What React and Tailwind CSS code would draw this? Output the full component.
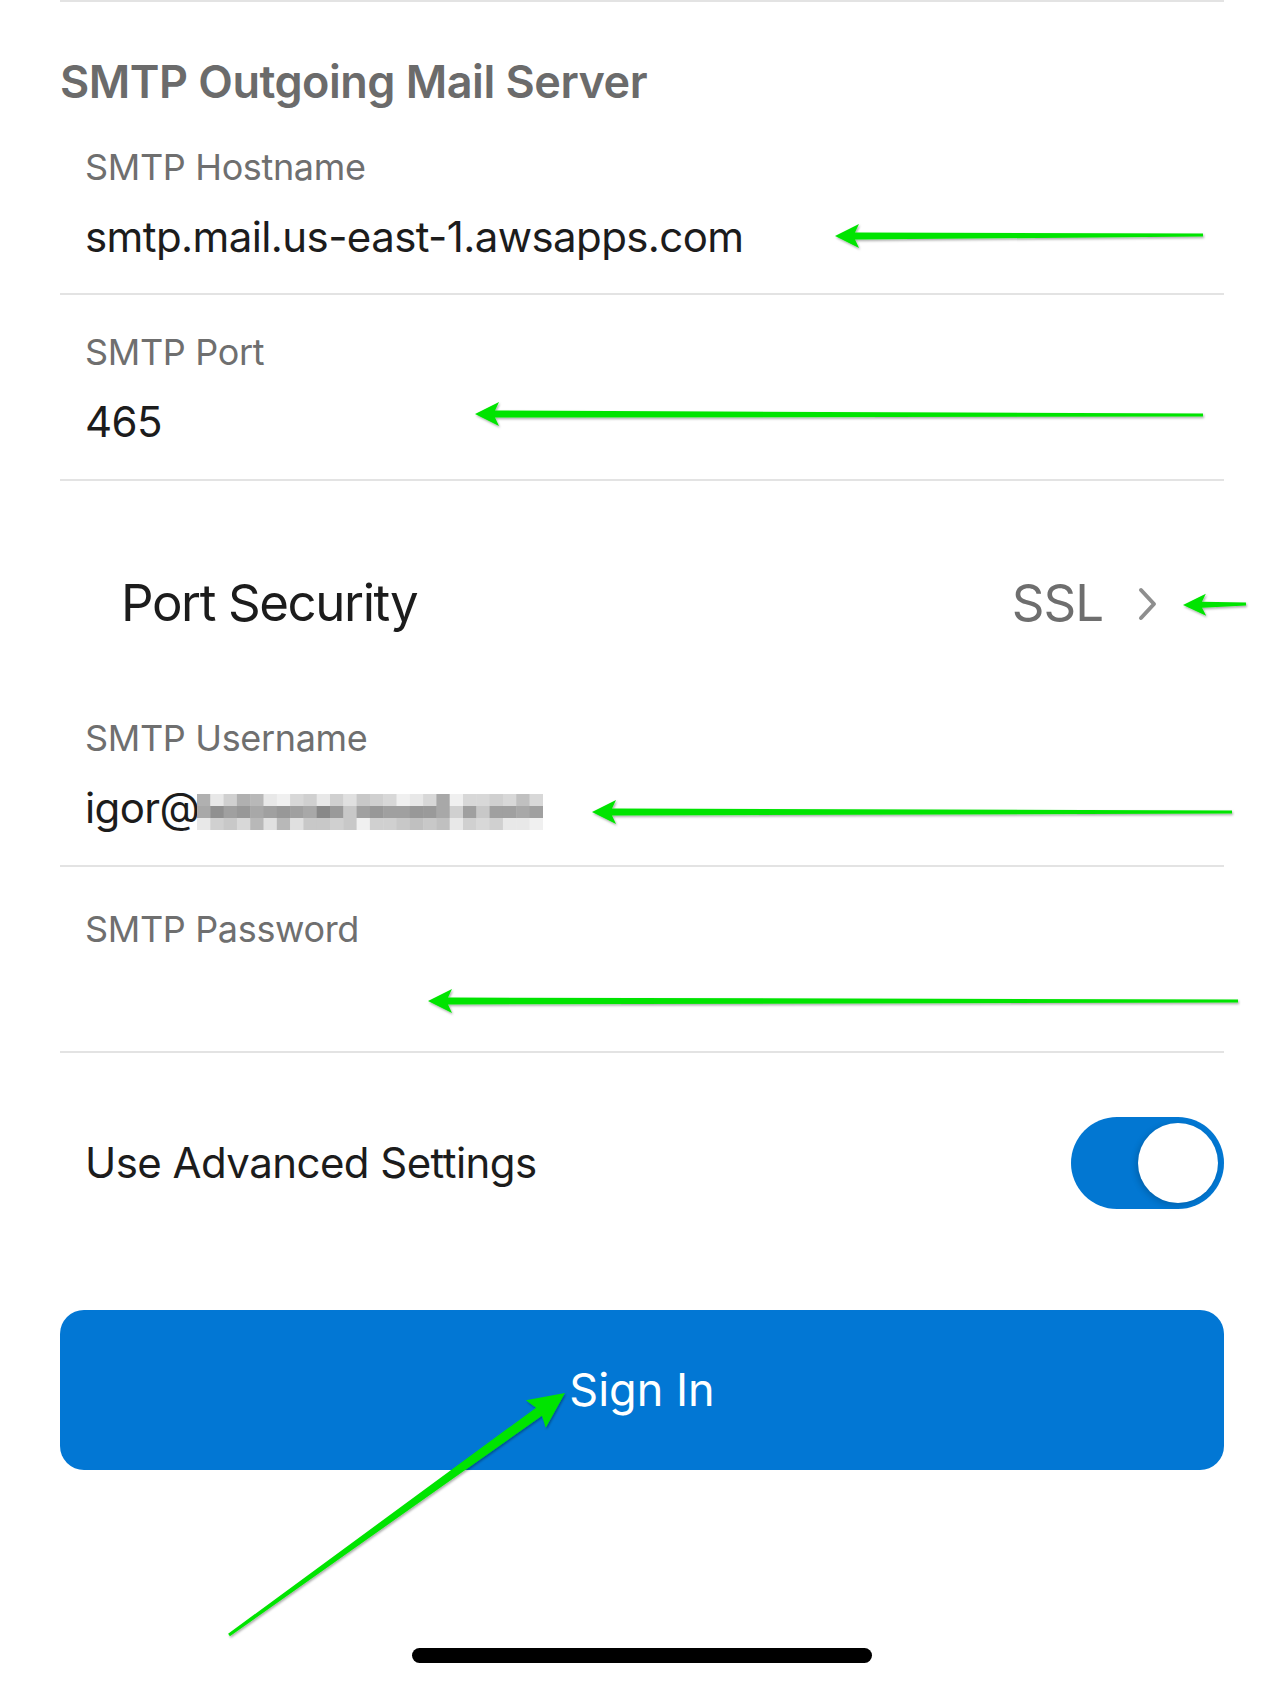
// App.jsx
const FONT = "font-['Inter','Liberation_Sans',sans-serif]";

const ROW1 = ['b0b0b0','e8e8e8','d0d0d0','b0b0b0','b8b8b8','e8e8e8','f0f0f0','d8d8d8','d0d0d0','e8e8e8','d0d0d0','e0e0e0','c8c8c8','d0d0d0','d8d8d8','f0f0f0','e8e8e8','d8d8d8','a8a8a8','f0f0f0','d8d8d8','d8d8d8','d0d0d0','d8d8d8','c0c0c0','d8d8d8'];
const ROW2 = ['a8a8a8','909090','a0a0a0','989898','a8a8a8','a0a0a0','989898','a0a0a0','a8a8a8','888888','9a9a9a','c8c8c8','a0a0a0','989898','a0a0a0','a0a0a0','989898','9a9a9a','a8a8a8','d0d0d0','a0a0a0','c8c8c8','a0a0a0','a0a0a0','a8a8a8','a0a0a0'];
const ROW3 = ['e8e8e8','d0d0d0','c8c8c8','d8d8d8','b8b8b8','e0e0e0','b8b8b8','e0e0e0','c8c8c8','c8c8c8','d0d0d0','c8c8c8','f0f0f0','d0d0d0','d0d0d0','c8c8c8','c0c0c0','c8c8c8','c0c0c0','e8e8e8','d0d0d0','d8d8d8','d0d0d0','e8e8e8','e8e8e8','f0f0f0'];

// pixelated blur over the e-mail domain
const Mosaic = () => {
  const w = 13.3;
  return (
    <svg width="346" height="36" viewBox="0 0 346 36" className="inline-block align-[-7px] -ml-[3px]">
      {[ROW1, ROW2, ROW3].map((row, r) =>
        row.map((c, i) => (
          <rect key={`${r}-${i}`} x={i * w} y={r * 12} width={w + 0.5} height="12.5" fill={`#${c}`} />
        ))
      )}
    </svg>
  );
};

// green annotation arrow, tail -> tip
const arrowPoints = ([tx, ty], [hx, hy], headLen, headHalf, tailW, neckW) => {
  const dx = hx - tx, dy = hy - ty;
  const len = Math.hypot(dx, dy);
  const ux = dx / len, uy = dy / len;
  const px = -uy, py = ux;
  const bx = hx - ux * headLen, by = hy - uy * headLen;
  const nx = hx - ux * (headLen - 4), ny = hy - uy * (headLen - 4);
  const pts = [
    [hx, hy],
    [bx + px * headHalf, by + py * headHalf],
    [nx + px * neckW, ny + py * neckW],
    [tx + px * tailW, ty + py * tailW],
    [tx - px * tailW, ty - py * tailW],
    [nx - px * neckW, ny - py * neckW],
    [bx - px * headHalf, by - py * headHalf],
  ];
  return pts.map((p) => p.join(',')).join(' ');
};

const ARROWS = [
  { tail: [1203, 235], tip: [835, 236], hl: 24, hh: 12, tw: 1.5, nw: 3.5 },
  { tail: [1203, 415], tip: [475, 414], hl: 24, hh: 12, tw: 1.5, nw: 3.5 },
  { tail: [1246, 604], tip: [1183, 605], hl: 23, hh: 11, tw: 1.5, nw: 3 },
  { tail: [1232, 812], tip: [592, 812], hl: 24, hh: 12, tw: 1.5, nw: 3.5 },
  { tail: [1238, 1001], tip: [428, 1001], hl: 24, hh: 12, tw: 1.5, nw: 3.5 },
  { tail: [229, 1635], tip: [565, 1393], hl: 36, hh: 17, tw: 1.5, nw: 5 },
];

const Arrows = () => (
  <svg className="absolute inset-0 pointer-events-none" width="1284" height="1687">
    <defs>
      <filter id="shadow" x="-10%" y="-50%" width="120%" height="200%">
        <feDropShadow dx="1" dy="1.5" stdDeviation="1" floodColor="#000" floodOpacity="0.35" />
      </filter>
    </defs>
    {ARROWS.map((a, i) => (
      <polygon key={i} points={arrowPoints(a.tail, a.tip, a.hl, a.hh, a.tw, a.nw)} fill="#00e400" filter="url(#shadow)" strokeLinejoin="round" />
    ))}
  </svg>
);

const Divider = () => <div className="h-[2px] bg-[#e3e3e3]" />;

const Field = ({ label, children, pt = 'pt-[33px]', h = 'h-[184px]' }) => (
  <div className={`pl-[25px] ${pt} ${h}`}>
    <div className="h-[48px] text-[36px] leading-[48px] text-[#6f6f6f] tracking-[-0.35px]">{label}</div>
    <div className="mt-[18px] h-[56px] text-[42px] leading-[56px] text-[#1c1c1c] tracking-[-0.6px] whitespace-nowrap">{children}</div>
  </div>
);

export default function App() {
  return (
    <div className={`relative w-[1284px] h-[1687px] bg-white overflow-hidden ${FONT}`}>
      <div className="mx-[60px]">
        <Divider />
        <h2 className="mt-[50px] h-[60px] text-[45px] leading-[60px] font-semibold text-[#6b6b6b] tracking-[-0.5px]">
          SMTP Outgoing Mail Server
        </h2>

        <Field label="SMTP Hostname" pt="pt-[31px]" h="h-[181px]">smtp.mail.us-east-1.awsapps.com</Field>
        <Divider />
        <Field label="SMTP Port">465</Field>
        <Divider />

        {/* Port Security */}
        <div className="h-[200px] pt-[88px] pl-[61px] pr-[66px] flex items-start justify-between">
          <span className="h-[68px] text-[51px] leading-[68px] text-[#1c1c1c] tracking-[-1.4px]">Port Security</span>
          <div className="h-[68px] flex items-center gap-[35px]">
            <span className="text-[51px] leading-[68px] text-[#6e6e6e] tracking-[-1px]">SSL</span>
            <svg width="20" height="34" viewBox="0 0 20 34" className="mt-[1px]">
              <path d="M3 3 L16 17 L3 31" fill="none" stroke="#8e8e8e" strokeWidth="4" strokeLinecap="round" strokeLinejoin="round" />
            </svg>
          </div>
        </div>

        <Field label="SMTP Username">
          igor@<Mosaic />
        </Field>
        <Divider />
        <Field label="SMTP Password" pt="pt-[38px]" h="h-[184px]">{''}</Field>
        <Divider />

        {/* advanced toggle */}
        <div className="h-[220px] pl-[25px] flex items-center justify-between">
          <span className="h-[56px] text-[42px] leading-[56px] text-[#1c1c1c] tracking-[-0.55px]">Use Advanced Settings</span>
          <div className="w-[153px] h-[92px] rounded-full bg-[#0277d2] flex items-center justify-end pr-[6px]">
            <div className="w-[80px] h-[80px] rounded-full bg-white shadow-[-2px_2px_6px_rgba(0,0,0,0.18)]" />
          </div>
        </div>

        <button className="mt-[37px] w-full h-[160px] rounded-[24px] bg-[#0277d4] flex items-center justify-center">
          <span className="h-[60px] text-[45px] leading-[60px] text-white">Sign In</span>
        </button>
      </div>

      <div className="mt-[178px] mx-auto w-[460px] h-[15px] rounded-full bg-black" />

      <Arrows />
    </div>
  );
}
